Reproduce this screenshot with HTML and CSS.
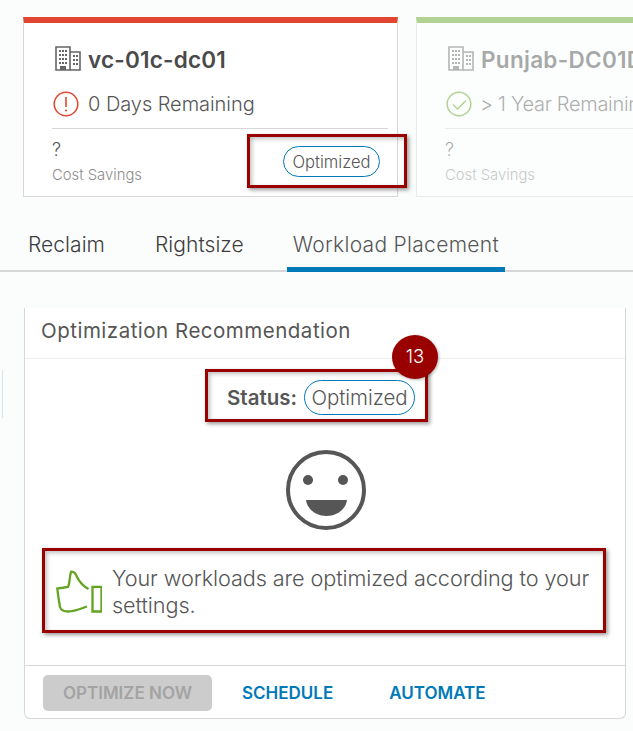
FILE: index.html
```html
<!DOCTYPE html>
<html lang="en">
<head>
<meta charset="utf-8">
<title>Optimization Recommendation</title>
<link rel="stylesheet" href="styles.css">
</head>
<body>
<div class="page">
  <section class="cards">
    <article class="card card-red">
      <h2 class="card-title">
        <svg class="building" viewBox="0 0 28 28" aria-hidden="true"><g fill="none" stroke="currentColor" stroke-width="1.6"><path d="M2 2h14v23H2z"/><path d="M16 7h10v18H16"/></g><path fill="currentColor" d="M5 5h2v2H5zM8 5h2v2H8zM11 5h2v2h-2zM5 9h2v2H5zM8 9h2v2H8zM11 9h2v2h-2zM5 13h2v2H5zM8 13h2v2H8zM11 13h2v2h-2zM5 17h2v2H5zM8 17h2v2H8zM11 17h2v2h-2zM6 21h6v4H6zM19 10h2v2h-2zM22 10h2v2h-2zM19 14h2v2h-2zM22 14h2v2h-2zM19 18h2v2h-2zM22 18h2v2h-2z"/></svg>
        vc-01c-dc01
      </h2>
      <div class="card-status">
        <svg class="status-icon" viewBox="0 0 26 26" aria-hidden="true"><circle cx="13" cy="13" r="11.8" fill="none" stroke="#e04632" stroke-width="1.5"/><path d="M13 6v10" stroke="#e04632" stroke-width="1.6"/><circle cx="13" cy="19.5" r="1.1" fill="#e04632"/></svg>
        0 Days Remaining
      </div>
      <div class="card-foot">
        <div>
          <div class="saving-value">?</div>
          <div class="saving-label">Cost Savings</div>
        </div>
        <span class="pill pill-small">Optimized</span>
      </div>
    </article>
    <article class="card card-green">
      <h2 class="card-title">
        <svg class="building" viewBox="0 0 28 28" aria-hidden="true"><g fill="none" stroke="currentColor" stroke-width="1.6"><path d="M2 2h14v23H2z"/><path d="M16 7h10v18H16"/></g><path fill="currentColor" d="M5 5h2v2H5zM8 5h2v2H8zM11 5h2v2h-2zM5 9h2v2H5zM8 9h2v2H8zM11 9h2v2h-2zM5 13h2v2H5zM8 13h2v2H8zM11 13h2v2h-2zM5 17h2v2H5zM8 17h2v2H8zM11 17h2v2h-2zM6 21h6v4H6zM19 10h2v2h-2zM22 10h2v2h-2zM19 14h2v2h-2zM22 14h2v2h-2zM19 18h2v2h-2zM22 18h2v2h-2z"/></svg>
        Punjab-DC01DC
      </h2>
      <div class="card-status">
        <svg class="status-icon" viewBox="0 0 26 26" aria-hidden="true"><circle cx="13" cy="13" r="11.8" fill="none" stroke="#62a420" stroke-width="1.5"/><path d="M7 13.5l4.5 4.5L20 9.5" fill="none" stroke="#62a420" stroke-width="1.5"/></svg>
        &gt; 1 Year Remaining
      </div>
      <div class="card-foot">
        <div>
          <div class="saving-value">?</div>
          <div class="saving-label">Cost Savings</div>
        </div>
      </div>
    </article>
  </section>

  <nav class="tabs">
    <a class="tab">Reclaim</a>
    <a class="tab">Rightsize</a>
    <a class="tab tab-active">Workload Placement</a>
  </nav>

  <section class="panel">
    <h3 class="panel-head">Optimization Recommendation</h3>
    <div class="panel-body">
      <div class="status-row">
        <strong>Status:</strong>
        <span class="pill pill-large">Optimized</span>
      </div>
      <svg class="smiley" viewBox="0 0 80 80" aria-hidden="true"><circle cx="40" cy="40" r="38" fill="none" stroke="#565656" stroke-width="4"/><circle cx="22" cy="30" r="5" fill="#565656"/><circle cx="57" cy="30" r="5" fill="#565656"/><path d="M20 50h41c-1 9-10 16-20.500 16S21 59 20 50z" fill="#565656"/></svg>
      <div class="message">
        <svg class="thumb" viewBox="0 0 46 44" aria-hidden="true"><g fill="none" stroke="#62a420" stroke-width="2.300"><path d="M32.500 19C27 16 23 11 21 7 19.500 3 17.500 1.300 15 1.800 13.500 6 14 13 12 17L1.300 18.500C2 25 3 31 4 37c1 3 4 4.500 8 4.500 7 0 13-3 19-5"/><path d="M36.500 16.800h9v24.700h-9z"/></g></svg>
        <p>Your workloads are optimized according to your settings.</p>
      </div>
    </div>
    <footer class="panel-foot">
      <button class="btn-primary" disabled>OPTIMIZE NOW</button>
      <a class="btn-link">SCHEDULE</a>
      <a class="btn-link">AUTOMATE</a>
    </footer>
  </section>

  <div class="side-mark"></div>
  <div class="callout callout-card"></div>
  <div class="callout callout-status"></div>
  <div class="callout callout-message"></div>
  <div class="step-badge">13</div>
</div>
</body>
</html>
```

FILE: styles.css
```css
* { box-sizing: border-box; }
html, body { margin: 0; padding: 0; }
body {
  background: #fbfdfd;
  color: #565656;
  font-family: "Inter", "Open Sans", "Liberation Sans", sans-serif;
  overflow: hidden;
}
.page {
  position: relative;
  width: 633px;
  height: 731px;
  overflow: hidden;
  padding-top: 17px;
}
.cards {
  display: flex;
  gap: 18px;
  padding-left: 23px;
  width: 900px;
}
.card {
  width: 375px;
  height: 180px;
  flex: none;
  background: #fff;
  border: 1px solid #d7d7d7;
  border-top: 6px solid;
  padding: 0 9px 0 28px;
}
.card-red { border-top-color: #e04632; }
.card-green {
  border-top-color: #62a420;
  opacity: .47;
}
.card-title {
  display: flex;
  align-items: center;
  gap: 6px;
  margin: 20px 0 0 2px;
  height: 32px;
  font-size: 22.500px;
  font-weight: 600;
  color: #4a4a4a;
  letter-spacing: .2px;
  white-space: nowrap;
}
.card-green .card-title { letter-spacing: .3px; }
.building { width: 28px; height: 28px; color: #666; flex: none; }
.card-status {
  display: flex;
  align-items: center;
  gap: 9px;
  height: 26px;
  margin-top: 16px;
  font-size: 20px;
  font-weight: 300;
  color: #565656;
  white-space: nowrap;
  letter-spacing: -.05px;
}
.card-green .card-status { gap: 8px; letter-spacing: -.3px; }
.status-icon { width: 26px; height: 26px; flex: none; margin-left: 1px; }
.card-foot {
  display: flex;
  justify-content: space-between;
  align-items: flex-start;
  margin-top: 11px;
  padding-top: 11px;
  border-top: 1px solid #d7d7d7;
}
.saving-value { font-size: 18px; line-height: 20px; font-weight: 300; }
.saving-label { font-size: 14.800px; line-height: 17px; margin-top: 7px; color: #8c8c8c; font-weight: 300; }
.pill {
  display: inline-flex;
  align-items: center;
  justify-content: center;
  border: 1px solid #0079b8;
  border-radius: 100px;
  font-weight: 300;
  color: #565656;
}
.pill-small {
  width: 97px;
  height: 31px;
  margin: 6px 8px 0 0;
  font-size: 16.600px;
}
.pill-large {
  width: 111px;
  height: 35px;
  font-size: 20.500px;
  letter-spacing: -.05px;
}
.tabs {
  display: flex;
  height: 59px;
  margin-top: 16px;
  padding: 0 0 0 28px;
  border-bottom: 2px solid #d7d7d7;
  font-size: 21px;
  font-weight: 300;
}
.tab {
  height: 59px;
  padding-top: 20px;
  line-height: 24px;
  color: #3c3c3c;
  white-space: nowrap;
  letter-spacing: .05px;
}
.tab:nth-child(2) { margin-left: 50px; }
.tab-active {
  margin-left: 43px;
  padding: 20px 6px 0;
  color: #565656;
  border-bottom: 5px solid #0079b8;
  letter-spacing: .3px;
}
.panel {
  width: 602px;
  height: 411px;
  margin: 36px 0 0 24px;
  display: flex;
  flex-direction: column;
  background: #fff;
  border: 1px solid #d7d7d7;
  border-top: 0;
  border-radius: 0 0 6px 6px;
}
.panel-head {
  height: 51px;
  margin: 0;
  padding: 10px 0 0 16px;
  font-size: 20.500px;
  line-height: 25px;
  font-weight: 400;
  color: #565656;
  border-bottom: 1px solid #eee;
  letter-spacing: .5px;
}
.panel-body {
  flex: 1;
  display: flex;
  flex-direction: column;
  align-items: center;
}
.status-row {
  display: flex;
  align-items: center;
  gap: 7px;
  margin: 21px 8px 0 0;
  font-size: 20.500px;
}
.status-row strong { font-weight: 600; }
.smiley { width: 80px; height: 80px; margin: 35px 0 0 2px; }
.message {
  display: flex;
  align-self: stretch;
  gap: 10px;
  margin-top: 29px;
  padding: 0 20px 0 31px;
}
.thumb { width: 46px; height: 44px; flex: none; margin-top: 11px; }
.message p {
  margin: 6px 0 0;
  font-size: 21.700px;
  line-height: 27px;
  font-weight: 300;
  letter-spacing: -.1px;
}
.panel-foot {
  display: flex;
  align-items: center;
  height: 53px;
  padding: 2px 0 0 18px;
  border-top: 1px solid #d7d7d7;
  font-size: 17px;
  font-weight: 600;
}
.btn-primary {
  width: 169px;
  height: 36px;
  border: 0;
  border-radius: 5px;
  background: #cccccc;
  color: #a3a3a3;
  font: inherit;
  padding: 0;
}
.btn-link { color: #0079b8; margin-left: 30px; }
.btn-link + .btn-link { margin-left: 56px; }
.callout {
  position: absolute;
  border: 3px solid #990000;
  box-shadow: 2px 2px 4px rgba(0, 0, 0, .4), inset 2px 2px 4px rgba(0, 0, 0, .25);
}
.callout-card { left: 247px; top: 134px; width: 160px; height: 54px; }
.callout-status { left: 205px; top: 369px; width: 223px; height: 53px; }
.callout-message { left: 42px; top: 548px; width: 564px; height: 85px; }
.step-badge {
  position: absolute;
  left: 392px;
  top: 335px;
  width: 46px;
  height: 44px;
  border-radius: 50%;
  background: #990000;
  color: #fff;
  font-size: 18.500px;
  font-weight: 300;
  line-height: 42px;
  text-align: center;
  box-shadow: 1px 1px 3px rgba(0, 0, 0, .3);
}
.side-mark {
  position: absolute;
  left: 2px;
  top: 370px;
  width: 1px;
  height: 48px;
  background: #d5e3ea;
}
```
